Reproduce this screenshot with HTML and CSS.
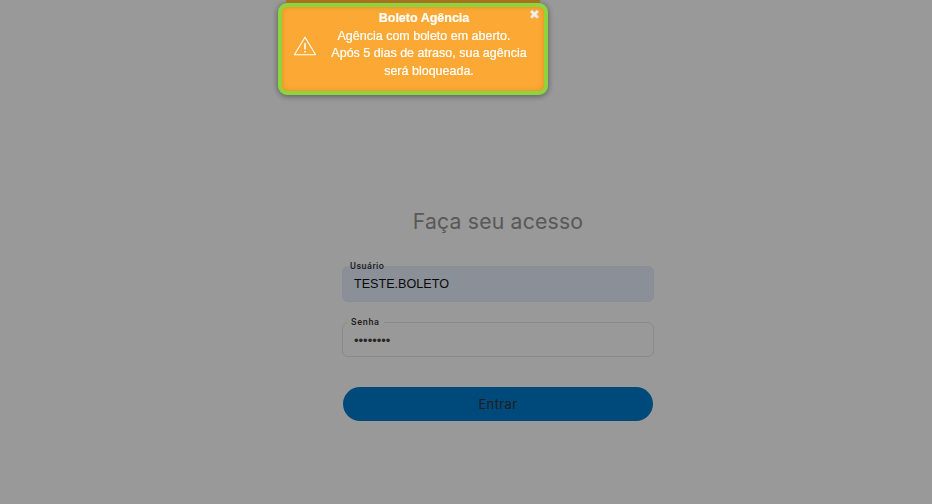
FILE: index.html
```html
<!DOCTYPE html>
<html lang="pt-BR">
<head>
<meta charset="utf-8">
<title>Login</title>
<link rel="stylesheet" href="styles.css">
</head>
<body>
<main class="page">
  <form class="login">
    <h1 class="title">Faça seu acesso</h1>
    <fieldset class="field field-filled">
      <legend class="legend legend-user">Usuário</legend>
      <span class="value">TESTE.BOLETO</span>
    </fieldset>
    <fieldset class="field">
      <legend class="legend">Senha</legend>
      <span class="value value-pass">••••••••</span>
    </fieldset>
    <button class="submit" type="button">Entrar</button>
  </form>
</main>
<div class="overlay"></div>
<aside class="toast">
  <svg class="toast-icon" width="24" height="20" viewBox="0 0 24 20" fill="none" stroke="#fff" stroke-width="1.1">
    <path d="M12 1.2 L22.6 18.8 H1.4 Z" stroke-linejoin="round"/>
    <path d="M12 7 V13.5" stroke-width="1.6"/>
    <path d="M12 15 V16.6" stroke-width="1.6"/>
  </svg>
  <div class="toast-text">
    <strong class="toast-line toast-title">Boleto Agência</strong>
    <span class="toast-line">Agência com boleto em aberto.</span>
    <span class="toast-body">Após 5 dias de atraso, sua agência será bloqueada.</span>
  </div>
  <span class="toast-close">✖</span>
</aside>
</body>
</html>
```
FILE: styles.css
```css
* { box-sizing: border-box; }
html, body { margin: 0; height: 100%; }
body { background: #fff; overflow: hidden; font-family: "Liberation Sans", Arial, sans-serif; }
.page { height: 504px; display: flex; justify-content: center; padding: 206px 0 0 64px; }
.login { width: 312px; display: flex; flex-direction: column; align-items: center; }
.title { margin: 0 0 25px; font: 400 21.2px/30px Inter, "Open Sans", sans-serif; color: #949494; letter-spacing: .2px; }
.field { width: 100%; height: 40px; margin: 0 0 15px; padding: 0 11px; border: 1px solid #e4e4e4; border-radius: 6px; }
.field-filled { height: 41px; background: #e8f0fe; border-color: #e6ebf5; }
.legend { padding: 0 4px; margin-left: -7px; font: 500 9px/11px Roboto, sans-serif; color: #333; letter-spacing: .7px; }
.legend-user { margin-left: -8px; letter-spacing: .5px; }
.value { display: block; font-size: 12.6px; line-height: 22px; color: #111; margin-top: 1px; }
.value-pass { font-size: 13px; line-height: 20px; margin-top: 3px; color: #444; }
.submit { width: 310px; height: 34px; margin-top: 15px; border: 0; border-radius: 17px; background: #007bce; color: #333; font: 400 13px Inter, sans-serif; letter-spacing: .4px; }
.overlay { position: fixed; inset: 0; background: rgba(0,0,0,.4); }
.toast { position: fixed; left: 278px; top: 3px; width: 270px; height: 92px; padding: 0 0 0 11px; display: flex; background: #fba934; border: 4px solid #8ed43c; border-radius: 9px; box-shadow: 0 1px 6px rgba(0,0,0,.45), inset 0 0 5px rgba(150,90,0,.3); color: #fff; }
.toast::before { content: ""; position: absolute; top: -7px; left: 4px; right: 4px; height: 3px; background: #a8711f; }
.toast-icon { flex: none; margin: 29px 0 0; }
.toast-text { width: 214px; margin: 3px 0 0 5px; display: flex; flex-direction: column; text-align: center; font-size: 12.5px; line-height: 17.7px; -webkit-text-stroke: .2px #fff; }
.toast-line { padding-right: 10px; }
.toast-title { font-weight: 700; }
.toast-close { position: absolute; top: 1px; right: 4px; font-size: 13px; line-height: 14px; color: #eee; }
```
